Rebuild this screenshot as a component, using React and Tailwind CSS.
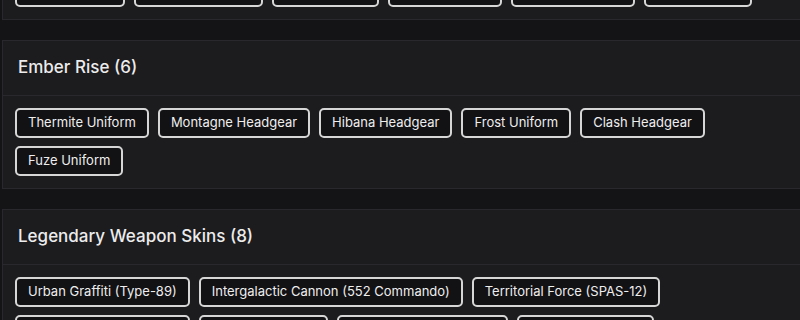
import React from "react";

const sections = [
  {
    title: "Elite Uniforms (6)",
    items: [
      "Echo Uniform",
      "Mira Headgear X",
      "Glaz Uniform",
      "Sledge Bundle",
      "Pulse Headgear",
      "Jäger Bundle",
    ],
  },
  {
    title: "Ember Rise (6)",
    items: [
      "Thermite Uniform",
      "Montagne Headgear",
      "Hibana Headgear",
      "Frost Uniform",
      "Clash Headgear",
      "Fuze Uniform",
    ],
  },
  {
    title: "Legendary Weapon Skins (8)",
    items: [
      "Urban Graffiti (Type-89)",
      "Intergalactic Cannon (552 Commando)",
      "Territorial Force (SPAS-12)",
      "Crimson Heat (MP5-SD)",
      "Zero Hour (M45)",
      "Golden Eagle (ARX200)",
      "Frost Bite (Vector)",
      "Royal Guard (L85A2)",
    ],
  },
];

function Section({ title, items }) {
  return (
    <div className="border border-[#29282c] bg-[#1c1b1e] -mr-4">
      <div className="h-[55px] flex items-center px-[15px] border-b border-[#29282c]">
        <h3 className="text-[17px] font-medium text-[#ececec]">{title}</h3>
      </div>
      <div className="p-3 flex flex-wrap gap-x-[9px] gap-y-[8px]">
        {items.map((item) => (
          <button
            key={item}
            className="h-[30px] px-[11px] border-2 border-[#d6d6d6] rounded-[5px] bg-[#121114] text-[13px] text-[#eeeeee] whitespace-nowrap"
          >
            {item}
          </button>
        ))}
      </div>
    </div>
  );
}

export default function App() {
  return (
    <div
      className="h-[320px] overflow-hidden bg-[#141316] pl-[2px]"
      style={{ fontFamily: "Inter, 'Noto Sans', sans-serif" }}
    >
      <div className="flex flex-col gap-5 -mt-[91px]">
        {sections.map((s) => (
          <Section key={s.title} {...s} />
        ))}
      </div>
    </div>
  );
}
